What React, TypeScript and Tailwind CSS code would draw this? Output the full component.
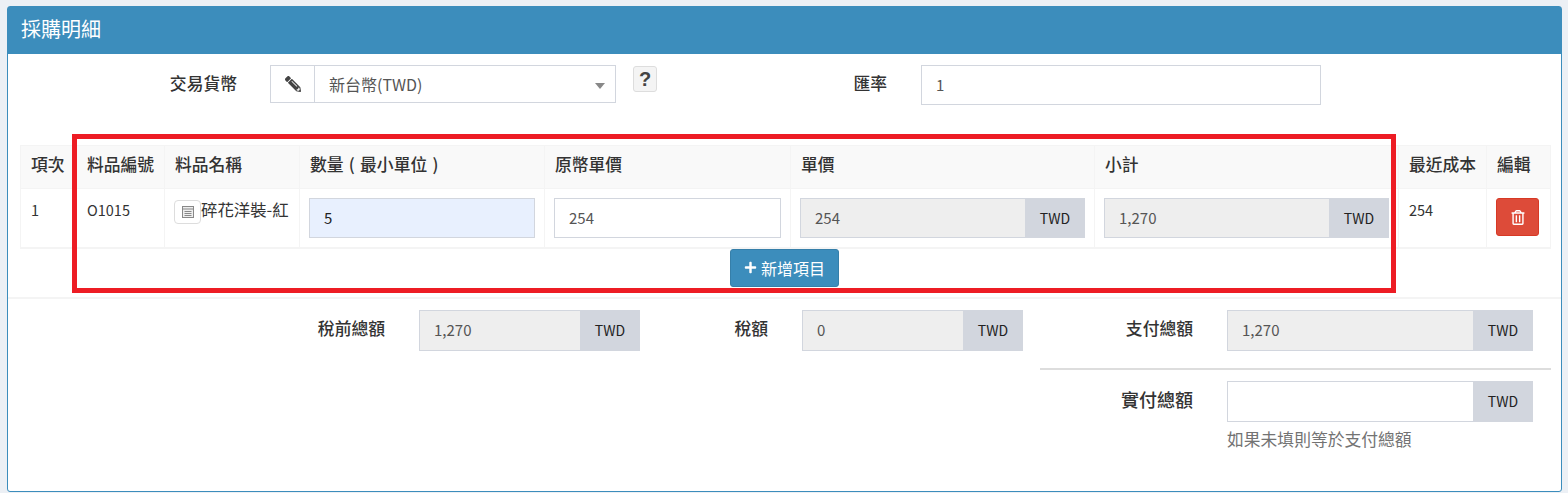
import { FaPencilAlt, FaRegTrashAlt, FaPlus } from "react-icons/fa"

const columns = [
  { title: "項次", width: "w-[56px]" },
  { title: "料品編號", width: "w-[88px]" },
  { title: "料品名稱", width: "w-[135px]" },
  { title: "數量 ( 最小單位 )", width: "w-[245px]" },
  { title: "原幣單價", width: "w-[246px]" },
  { title: "單價", width: "w-[304px]" },
  { title: "小計", width: "w-[304px]" },
  { title: "最近成本", width: "w-[88px]" },
  { title: "編輯", width: "w-[64px]" },
]

function AmountBox({
  value,
  size,
  readOnly = true,
}: {
  value: string
  size: string
  readOnly?: boolean
}) {
  return (
    <div className={`flex ${size}`}>
      <div
        className={`flex-1 flex items-center px-[14px] border border-[#d2d6de] border-r-0 text-[15px] text-[#555] ${
          readOnly ? "bg-[#eeeeee]" : "bg-white"
        }`}
      >
        {value}
      </div>
      <div className="w-[60px] flex items-center justify-center bg-[#d2d6de] text-[14px] text-[#222]">TWD</div>
    </div>
  )
}

export default function App() {
  return (
    <div
      className="h-[493px] bg-[#ecf0f5] pt-[6px] pl-[7px] pr-[6px] text-[#333] overflow-hidden"
      style={{ fontFamily: '"Noto Sans CJK TC", "Noto Sans", sans-serif' }}
    >
      <div className="relative h-[486px] bg-white border border-[#3c8dbc] rounded-[3px]">
        {/* Header */}
        <div className="h-[47px] bg-[#3c8dbc] text-white text-[20px] flex items-center pl-[13px] pb-[4px]">採購明細</div>

        {/* Currency row */}
        <div className="flex items-start pt-[11px] h-[91px]">
          <div className="w-[229px] h-[38px] flex items-center justify-end text-[16.8px] font-medium">交易貨幣</div>
          <div className="ml-[33px] w-[346px] h-[38px] flex border border-[#d2d6de]">
            <div className="w-[44px] flex items-center justify-center border-r border-[#d2d6de] text-[#444]">
              <FaPencilAlt className="w-[16px] h-[16px] -scale-x-100" />
            </div>
            <div className="flex-1 flex items-center pl-[14px] text-[16px] text-[#555]">新台幣(TWD)</div>
            <div className="w-0 h-0 mt-[17px] mr-[10px] border-x-[5px] border-x-transparent border-t-[6px] border-t-[#888]" />
          </div>
          <div
            className="ml-[17px] mt-[1px] w-[24px] h-[26px] flex items-center justify-center bg-[#f4f4f4] border border-[#ddd] rounded-[3px] text-[20px] font-bold text-[#444]"
            style={{ fontFamily: '"Liberation Sans", sans-serif' }}
          >
            ?
          </div>
          <div className="ml-[197px] w-[33px] h-[38px] flex items-center justify-end text-[16.8px] font-medium whitespace-nowrap">匯率</div>
          <div className="ml-[34px] w-[400px] h-[40px] flex items-center px-[14px] border border-[#d2d6de] text-[15px] text-[#555]">1</div>
        </div>

        {/* Items table */}
        <div className="px-[12px]">
          <table className="table-fixed border-collapse w-[1530px]">
            <thead>
              <tr className="h-[43px] bg-[#f9f9f9]">
                {columns.map((col) => (
                  <th
                    key={col.title}
                    className={`${col.width} border border-[#f4f4f4] pl-[10px] pb-[4px] text-left text-[16.8px] font-medium whitespace-nowrap [word-spacing:1.5px]`}
                  >
                    {col.title}
                  </th>
                ))}
              </tr>
            </thead>
            <tbody>
              <tr className="h-[59px] border-b-2 border-[#f4f4f4] align-top text-[14.5px]">
                <td className="border-x border-[#f4f4f4] px-[10px] pt-[10px]">1</td>
                <td className="border-x border-[#f4f4f4] px-[10px] pt-[10px]">O1015</td>
                <td className="border-x border-[#f4f4f4] pl-[9px] pt-[9px]">
                  <div className="flex items-start whitespace-nowrap text-[16.4px]">
                    <span className="w-[27px] h-[24px] mt-[2px] flex items-center justify-center border border-[#ddd] rounded-[4px] bg-white">
                      <svg viewBox="0 0 14 14" className="w-[14px] h-[14px]" fill="none" stroke="#888" strokeWidth="1">
                        <rect x="1.5" y="1.5" width="11" height="11" fill="#eee" />
                        <path d="M1.5 4h11M3.5 6.5h7M3.5 8.5h7M3.5 10.5h7" />
                      </svg>
                    </span>
                    <span className="leading-[22px]">碎花洋裝-紅</span>
                  </div>
                </td>
                <td className="border-x border-[#f4f4f4] pl-[9px] pt-[9px]">
                  <div className="w-[226px] h-[40px] flex items-center px-[14px] bg-[#e8f0fe] border border-[#d2d6de] text-[15px] text-[#222]">5</div>
                </td>
                <td className="border-x border-[#f4f4f4] pl-[9px] pt-[9px]">
                  <div className="w-[227px] h-[40px] flex items-center px-[14px] border border-[#d2d6de] text-[15px] text-[#555]">254</div>
                </td>
                <td className="border-x border-[#f4f4f4] pl-[9px] pt-[9px]">
                  <AmountBox value="254" size="w-[285px] h-[40px]" />
                </td>
                <td className="border-x border-[#f4f4f4] pl-[9px] pt-[9px]">
                  <AmountBox value="1,270" size="w-[285px] h-[40px]" />
                </td>
                <td className="border-x border-[#f4f4f4] px-[10px] pt-[10px]">254</td>
                <td className="border-x border-[#f4f4f4] pl-[9px] pt-[9px]">
                  <div className="w-[43px] h-[38px] flex items-center justify-center bg-[#dd4b39] border border-[#d73925] rounded-[3px] text-white">
                    <FaRegTrashAlt className="w-[14px] h-[15px]" />
                  </div>
                </td>
              </tr>
            </tbody>
          </table>
        </div>

        {/* Add item */}
        <div className="flex justify-center h-[50px] border-b-2 border-[#f4f4f4]">
          <div className="w-[109px] h-[38px] flex items-center justify-center gap-[4px] bg-[#3c8dbc] border border-[#367fa9] rounded-[3px] text-white text-[16px]">
            <FaPlus className="w-[13px] h-[13px]" />
            新增項目
          </div>
        </div>

        {/* Totals */}
        <div className="flex items-start pt-[11px]">
          <div className="w-[377px] h-[41px] pb-[2px] flex items-center justify-end text-[16.8px] font-medium">稅前總額</div>
          <div className="ml-[34px]">
            <AmountBox value="1,270" size="w-[221px] h-[41px]" />
          </div>
          <div className="w-[128px] h-[41px] pb-[2px] flex items-center justify-end text-[16.8px] font-medium">稅額</div>
          <div className="ml-[34px]">
            <AmountBox value="0" size="w-[221px] h-[41px]" />
          </div>
          <div className="flex-1">
            <div className="flex">
              <div className="w-[170px] h-[41px] pb-[2px] flex items-center justify-end text-[16.8px] font-medium">支付總額</div>
              <div className="ml-[34px]">
                <AmountBox value="1,270" size="w-[306px] h-[41px]" />
              </div>
            </div>
            <div className="ml-[17px] mr-[10px] mt-[17px] h-[2px] bg-[#dddddd]" />
            <div className="flex mt-[11px]">
              <div className="w-[170px] h-[41px] pb-[3px] flex items-center justify-end text-[18px] font-medium">實付總額</div>
              <div className="ml-[34px]">
                <AmountBox value="" size="w-[306px] h-[41px]" readOnly={false} />
              </div>
            </div>
            <div className="ml-[204px] mt-[6px] text-[16.8px] leading-[22px] text-[#737373] whitespace-nowrap">如果未填則等於支付總額</div>
          </div>
        </div>

        {/* Annotation rectangle drawn over the screenshot */}
        <div className="absolute left-[64px] top-[127px] w-[1324px] h-[159px] border-[5px] border-[#ed1c24] pointer-events-none" />
      </div>
    </div>
  )
}
